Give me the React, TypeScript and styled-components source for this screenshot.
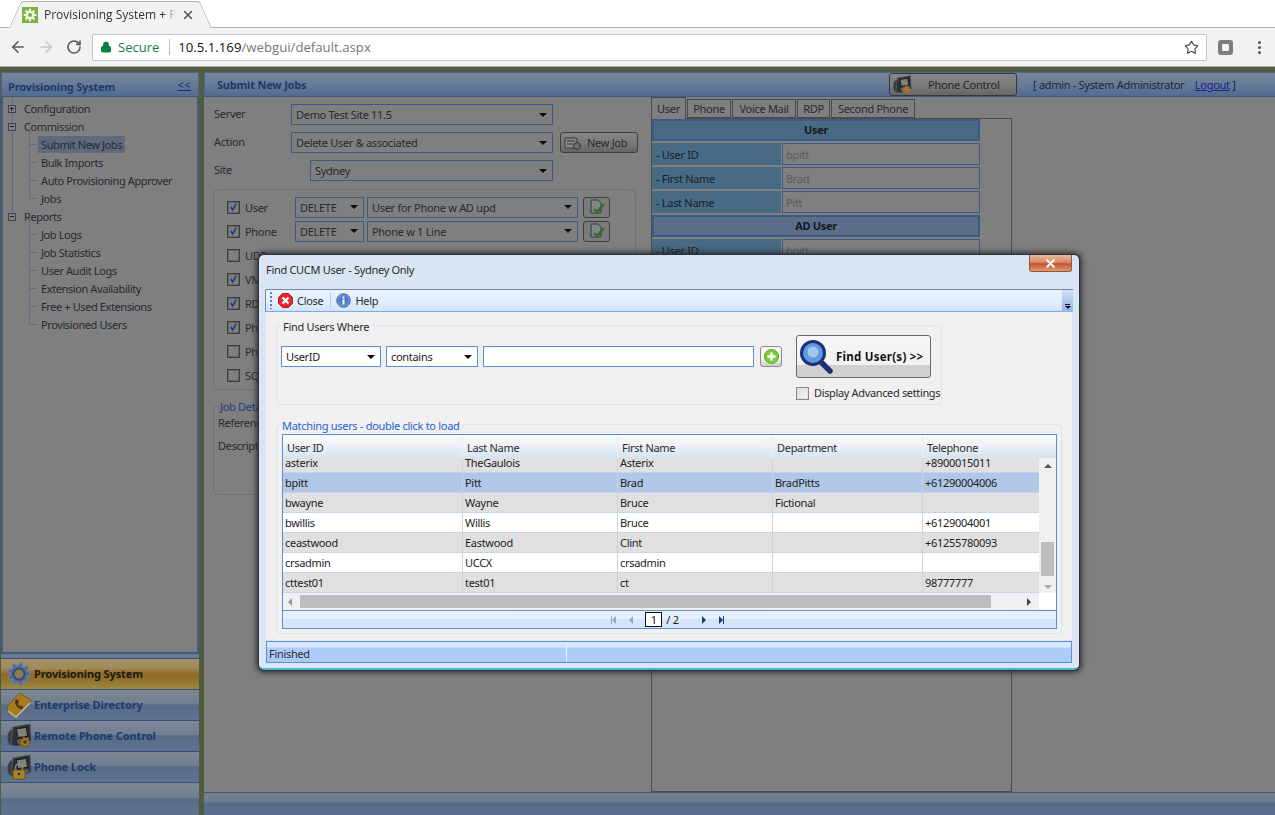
import React from "react";
import styled, { createGlobalStyle } from "styled-components";
import { ArrowLeft, ArrowRight, RotateCw, Lock, Star, X } from "lucide-react";

const UI = `"Noto Sans", "DejaVu Sans", sans-serif`;

const Global = createGlobalStyle`
  html, body { margin: 0; padding: 0; width: 1275px; height: 815px; overflow: hidden; }
  body { font-family: ${UI}; font-size: 11px; letter-spacing: -0.3px; }
  * { box-sizing: border-box; }
`;

const Page = styled.div`
  width: 1275px;
  height: 815px;
  display: flex;
  flex-direction: column;
`;

/* ---------- browser chrome ---------- */
const TabStrip = styled.div`
  height: 28px;
  flex: none;
  background: #fff;
  display: flex;
  align-items: flex-end;
  padding-left: 15px;
  box-shadow: inset 0 -1px 0 #b4b4b4;
`;
const BrowserTab = styled.div`
  position: relative;
  width: 190px;
  height: 27px;
  display: flex;
  align-items: center;
  padding-left: 7px;
  font-family: "Open Sans", sans-serif;
  font-size: 12px;
  letter-spacing: 0;
  color: #333;
  &::before, &::after {
    content: "";
    position: absolute;
    top: 0;
    bottom: 0;
    width: 55%;
    background: #f2f2f2;
    border: 1px solid #b4b4b4;
    border-bottom: none;
    z-index: 0;
  }
  &::before { left: 0; border-right: none; border-radius: 3px 0 0 0; transform: skewX(-24deg); }
  &::after { right: 0; border-left: none; border-radius: 0 3px 0 0; transform: skewX(24deg); }
  & > * { position: relative; z-index: 1; }
`;
const TabTitle = styled.span`
  width: 132px;
  margin-left: 6px;
  white-space: nowrap;
  overflow: hidden;
  -webkit-mask-image: linear-gradient(90deg, #000 90%, transparent 100%);
  mask-image: linear-gradient(90deg, #000 90%, transparent 100%);
`;
const TabClose = styled.span`
  display: flex;
  margin-left: 5px;
  color: #555;
`;
const BrowserBar = styled.div`
  height: 39px;
  flex: none;
  background: #f2f2f2;
  border-bottom: 1px solid #a9a9a9;
  display: flex;
  align-items: center;
  padding-left: 4px;
`;
const NavBtn = styled.span<{ $c: string }>`
  width: 28px;
  display: flex;
  justify-content: center;
  color: ${(p) => p.$c};
`;
const AddressBar = styled.div`
  width: 1115px;
  height: 27px;
  margin-left: 4px;
  background: #fff;
  border: 1px solid #c4c4c4;
  border-radius: 2px;
  display: flex;
  align-items: center;
  padding-left: 7px;
  font-family: "Open Sans", sans-serif;
  font-size: 13.2px;
  letter-spacing: 0;
  position: relative;
`;
const Secure = styled.span`
  color: #0b8043;
  margin-left: 6px;
  font-size: 13px;
`;
const AddrSep = styled.span`
  width: 1px;
  height: 16px;
  background: #bdbdbd;
  margin: 0 8px 0 10px;
`;
const Host = styled.span`
  color: #111;
`;
const Path = styled.span`
  color: #777;
  flex: 1;
`;
const StarSlot = styled.span`
  display: flex;
  color: #444;
  margin-right: 7px;
`;
const ExtIcon = styled.span`
  width: 15px;
  height: 15px;
  margin-left: 11px;
  border-radius: 3px;
  background: #7d7d7d;
  display: flex;
  align-items: center;
  justify-content: center;
  &::after {
    content: "";
    width: 7px;
    height: 7px;
    background: #f2f2f2;
    border-radius: 1px;
  }
`;
const Kebab = styled.span`
  margin-left: 25px;
  display: flex;
  flex-direction: column;
  gap: 2px;
  & > i { width: 3px; height: 3px; border-radius: 50%; background: #555; display: block; }
`;

/* ---------- application (dimmed behind the dialog) ---------- */
const AppArea = styled.div`
  position: relative;
  flex: 1;
  min-height: 0;
  background: #515c3f;
  display: flex;
  padding: 5px 0 0 1px;
  color: #262a30;
`;
const LeftColumn = styled.div`
  width: 198px;
  display: flex;
  flex-direction: column;
`;
const PanelHeader = styled.div`
  height: 25px;
  flex: none;
  background: linear-gradient(180deg, #78849a 0%, #6a7c98 45%, #516b91 100%);
  border: 1px solid #4a6690;
  border-bottom: 1px solid #3f5b85;
  display: flex;
  align-items: center;
  font-weight: bold;
  letter-spacing: -0.2px;
  color: #1c3a6c;
`;
const LeftHeader = styled(PanelHeader)`
  justify-content: space-between;
  padding: 4px 7px 0 6px;
`;
const Collapse = styled.a`
  color: #11268a;
  text-decoration: underline;
  font-weight: normal;
  font-size: 11px;
  letter-spacing: 0.4px;
  margin-top: -5px;
`;
const TreeBox = styled.div`
  flex: 1;
  min-height: 0;
  background: #7f7f7f;
  border: 2px solid #3f5b85;
  border-top: none;
  padding: 3px 0 0 4px;
  letter-spacing: -0.4px;
`;
const TreeRow = styled.div`
  position: relative;
  height: 18px;
  line-height: 18px;
  padding-left: 17px;
  white-space: nowrap;
`;
const Expander = styled.span`
  position: absolute;
  left: 1px;
  top: 5px;
  width: 8px;
  height: 8px;
  border: 1px solid #3c4450;
  background: #7f7f7f;
  z-index: 1;
  &::before {
    content: "";
    position: absolute;
    left: 1px;
    right: 1px;
    top: 2px;
    height: 1px;
    background: #222;
  }
  &::after {
    content: "";
    display: ${(p: { $plus?: boolean }) => (p.$plus ? "block" : "none")};
    position: absolute;
    top: 1px;
    bottom: 1px;
    left: 2px;
    width: 1px;
    background: #222;
  }
`;
const TreeTrunk = styled.div`
  position: relative;
  &::before {
    content: "";
    position: absolute;
    left: 5px;
    top: -3px;
    height: 120px;
    width: 1px;
    background: #5b6c85;
  }
`;
const TreeChildren = styled.div`
  position: relative;
  margin-left: 22px;
  &::before {
    content: "";
    position: absolute;
    left: 0;
    top: -9px;
    bottom: 9px;
    width: 1px;
    background: #5b6c85;
  }
`;
const TreeChild = styled.div`
  position: relative;
  height: 18px;
  line-height: 18px;
  padding-left: 12px;
  white-space: nowrap;
  &::before {
    content: "";
    position: absolute;
    left: 0;
    top: 8px;
    width: 8px;
    height: 1px;
    background: #5b6c85;
  }
`;
const TreeSelected = styled.span`
  background: #5f6a7c;
  padding: 1px 3px;
  margin-left: -3px;
`;
const NavGap = styled.div`
  height: 5px;
  flex: none;
  background: #6c7a8e;
  border-bottom: 1px solid #34507c;
`;
const NavItem = styled.div<{ $active?: boolean }>`
  height: 31px;
  flex: none;
  display: flex;
  align-items: center;
  gap: 2px;
  padding: 0 0 1px 5px;
  font-weight: bold;
  letter-spacing: -0.1px;
  border-bottom: 1px solid #34507c;
  color: ${(p) => (p.$active ? "#1b1a14" : "#1d3a68")};
  background: ${(p) =>
    p.$active
      ? "linear-gradient(180deg,#a3916e 0%,#a38a58 30%,#8e6a25 50%,#93722b 70%,#9b8a44 100%)"
      : "linear-gradient(180deg,#7d8795 0%,#727f92 45%,#586c88 50%,#5f7290 100%)"};
`;
const NavFooter = styled.div`
  height: 32px;
  flex: none;
  background: linear-gradient(180deg, #7d8795 0%, #727f92 45%, #586c88 50%, #5f7290 100%);
`;

const RightColumn = styled.div`
  flex: 1;
  margin-left: 5px;
  display: flex;
  flex-direction: column;
  min-width: 0;
`;
const RightHeader = styled(PanelHeader)`
  padding-left: 12px;
  border-right: none;
`;
const HeaderTitle = styled.span`
  width: 672px;
`;
const PhoneControl = styled.div`
  width: 128px;
  height: 23px;
  border: 1px solid #33383f;
  border-radius: 3px;
  background: linear-gradient(180deg, #878787 0%, #7b7b7b 55%, #666 100%);
  display: flex;
  align-items: center;
  padding-left: 2px;
  font-weight: normal;
  color: #22262c;
  letter-spacing: -0.2px;
  & > span { margin-left: 16px; }
`;
const UserBadge = styled.div`
  margin-left: 16px;
  font-weight: normal;
  color: #22262c;
  white-space: nowrap;
  letter-spacing: -0.3px;
`;
const LogoutLink = styled.a`
  color: #11268a;
  text-decoration: underline;
  margin-left: 8px;
`;
const RightBody = styled.div`
  flex: 1;
  min-height: 0;
  background: #7f7f7f;
  display: flex;
`;
const FormCol = styled.div`
  width: 447px;
  padding: 7px 0 0 9px;
  display: flex;
  flex-direction: column;
`;
const FormRow = styled.div`
  display: flex;
  align-items: center;
  height: 21px;
  margin-bottom: 7px;
`;
const FormLabel = styled.span<{ $w: number }>`
  width: ${(p) => p.$w}px;
  margin-left: 1px;
  margin-top: -2px;
`;
const DimSelect = styled.div<{ $w: number }>`
  width: ${(p) => p.$w}px;
  height: 21px;
  flex: none;
  border: 1px solid #3f5b85;
  display: flex;
  align-items: center;
  justify-content: space-between;
  padding: 0 5px 0 4px;
  white-space: nowrap;
  overflow: hidden;
`;
const Caret = styled.i`
  width: 0;
  height: 0;
  flex: none;
  border-left: 4px solid transparent;
  border-right: 4px solid transparent;
  border-top: 4px solid #0c0c0c;
`;
const NewJob = styled.div`
  width: 78px;
  height: 21px;
  margin-left: 7px;
  border: 1px solid #3a3f46;
  border-radius: 3px;
  background: linear-gradient(180deg, #868686, #777 60%, #656565);
  display: flex;
  align-items: center;
  gap: 5px;
  padding-left: 3px;
`;
const GroupBox = styled.div`
  width: 423px;
  height: 201px;
  margin: 1px 0 0 0;
  border: 1px solid #707070;
  border-radius: 5px;
  padding: 5px 0 0 13px;
`;
const GroupRow = styled.div`
  height: 24px;
  display: flex;
  align-items: center;
`;
const DimCheckLabel = styled.span`
  width: 50px;
  margin-left: 5px;
  white-space: nowrap;
`;
const RowButton = styled.div`
  width: 27px;
  height: 21px;
  margin-left: 5px;
  border: 1px solid #3a3f46;
  border-radius: 3px;
  background: #7b7b7b;
  display: flex;
  align-items: center;
  justify-content: center;
`;
const Gap3 = styled.span`
  width: 3px;
  flex: none;
`;
const CheckBox = styled.span<{ $dim?: boolean }>`
  width: 13px;
  height: 13px;
  flex: none;
  display: flex;
  align-items: center;
  justify-content: center;
  border: 1px solid ${(p) => (p.$dim ? "#3c3c3c" : "#8a8a8a")};
  box-shadow: inset 0 0 0 1px ${(p) => (p.$dim ? "#676767" : "#e0e0e0")};
  background: ${(p) => (p.$dim ? "#7f7f7f" : "linear-gradient(135deg,#dcdcdc,#f8f8f8)")};
`;
const JobDetails = styled.div`
  position: relative;
  width: 423px;
  height: 90px;
  margin-top: 15px;
  border: 1px solid #707070;
  border-radius: 5px;
`;
const JobLegend = styled.span`
  position: absolute;
  left: 4px;
  top: -7px;
  background: #7f7f7f;
  padding: 0 2px;
  color: #1c3a80;
`;
const JobLine = styled.div<{ $top: number }>`
  margin: ${(p) => p.$top}px 0 0 4px;
  height: 14px;
  line-height: 14px;
`;
const TabsCol = styled.div`
  width: 361px;
  display: flex;
  flex-direction: column;
`;
const TabRow = styled.div`
  height: 21px;
  flex: none;
  display: flex;
  align-items: flex-end;
  gap: 1px;
`;
const DimTab = styled.div<{ $w: number; $active?: boolean }>`
  width: ${(p) => p.$w}px;
  height: ${(p) => (p.$active ? 22 : 19)}px;
  margin-bottom: ${(p) => (p.$active ? -1 : 0)}px;
  position: relative;
  border: 1px solid #4a4a4a;
  border-bottom: ${(p) => (p.$active ? "none" : "1px solid #4a4a4a")};
  background: #7f7f7f;
  text-align: center;
  line-height: 17px;
  padding-top: ${(p) => (p.$active ? 2 : 0)}px;
`;
const TabBody = styled.div`
  flex: 1;
  border: 1px solid #4a4a4a;
  overflow: hidden;
`;
const SectionBar = styled.div<{ $blue?: boolean }>`
  width: 328px;
  height: 22px;
  margin-top: ${(p) => (p.$blue ? 0 : 2)}px;
  border: 2px solid #3c5a88;
  background: ${(p) => (p.$blue ? "#476a85" : "#5b6d88")};
  color: #141a22;
  font-weight: bold;
  text-align: center;
  line-height: 18px;
`;
const DetailRow = styled.div`
  width: 328px;
  height: 22px;
  margin: 2px 0 0;
  display: flex;
`;
const DetailLabel = styled.div`
  width: 129px;
  background: #476a85;
  padding-left: 4px;
  line-height: 24px;
  color: #1a2026;
`;
const DetailValue = styled.div`
  flex: 1;
  margin-left: 1px;
  border: 1px solid #3f5b85;
  padding-left: 3px;
  line-height: 22px;
  color: #5b5b5b;
`;
const RightFooter = styled.div`
  height: 23px;
  flex: none;
  border-top: 1px solid #3f5b85;
  background: linear-gradient(180deg, #75808f 0%, #6f7c90 40%, #566b8b 45%, #5d7090 100%);
`;

/* ---------- dialog ---------- */
const Modal = styled.div`
  position: absolute;
  left: 259px;
  top: 188px;
  width: 820px;
  height: 415px;
  background: #d9e5f2;
  border-radius: 5px;
  border-bottom: 2px solid #4cb6d6;
  box-shadow: 0 0 0 1px #2e3236, 0 0 6px 2px #1f2124;
  display: flex;
  flex-direction: column;
  color: #2b2b2b;
`;
const TitleBar = styled.div`
  height: 34px;
  flex: none;
  display: flex;
  justify-content: space-between;
  align-items: flex-start;
  padding: 0 7px 0 7px;
`;
const TitleText = styled.span`
  margin-top: 7px;
  line-height: 15px;
`;
const CloseX = styled.div`
  width: 43px;
  height: 17px;
  border: 1px solid #8a5a3a;
  border-top: none;
  border-radius: 0 0 3px 3px;
  background: linear-gradient(180deg, #e9b9a0 0%, #d98a66 45%, #c0562f 55%, #e39a74 100%);
  display: flex;
  align-items: center;
  justify-content: center;
  color: #fff;
`;
const ToolBar = styled.div`
  height: 23px;
  flex: none;
  margin: 0 6px;
  border: 1px solid #7a8794;
  border-bottom: 1px solid #7dabe8;
  border-right: none;
  border-radius: 2px 0 0 0;
  background: linear-gradient(180deg, #e9f2fe 0%, #e1edfd 60%, #d2e3fa 100%);
  display: flex;
  align-items: center;
  padding-left: 4px;
`;
const Grip = styled.span`
  width: 2px;
  height: 17px;
  background: repeating-linear-gradient(180deg, #4f82cc 0 2px, transparent 2px 4px);
  margin-right: 6px;
`;
const ToolItem = styled.span`
  display: flex;
  align-items: center;
  gap: 4px;
`;
const ToolSep = styled.span`
  width: 1px;
  height: 16px;
  background: #b7cbe4;
  margin: 0 5px 0 7px;
`;
const Overflow = styled.span`
  margin-left: auto;
  width: 11px;
  height: 22px;
  background: linear-gradient(180deg, #cfe0f7 0%, #8fb4e8 100%);
  display: flex;
  flex-direction: column;
  align-items: center;
  justify-content: flex-end;
  padding-bottom: 3px;
  gap: 1px;
  &::before { content: ""; width: 5px; height: 1px; background: #111; }
  &::after { content: ""; border-left: 3px solid transparent; border-right: 3px solid transparent; border-top: 3px solid #111; }
`;
const ModalBody = styled.div`
  flex: 1;
  min-height: 0;
  margin: 0 7px;
  background-color: #f0f0f0;
  background-image: radial-gradient(#e8e8e8 0.6px, transparent 0.7px);
  background-size: 4px 4px;
  padding: 13px 0 0 10px;
`;
const Field = styled.div<{ $w: number; $h: number }>`
  position: relative;
  width: ${(p) => p.$w}px;
  height: ${(p) => p.$h}px;
  border: 1px solid #dfe4ea;
  border-radius: 4px;
`;
const FieldLegend = styled.span<{ $blue?: boolean }>`
  position: absolute;
  left: ${(p) => (p.$blue ? 3 : 4)}px;
  top: -6px;
  line-height: 14px;
  padding: 0 3px 0 2px;
  background: #f0f0f0;
  white-space: nowrap;
  color: ${(p) => (p.$blue ? "#1f5fd0" : "#2b2b2b")};
`;
const FindRow = styled.div`
  display: flex;
  align-items: flex-start;
  padding: 9px 0 0 4px;
`;
const FindInputs = styled.div`
  display: flex;
  align-items: center;
  margin-top: 11px;
  gap: 5px;
`;
const LightSelect = styled.div<{ $w: number }>`
  width: ${(p) => p.$w}px;
  height: 21px;
  background: #fff;
  border: 1px solid #5b8fd6;
  display: flex;
  align-items: center;
  justify-content: space-between;
  padding: 0 5px 0 4px;
  color: #222;
`;
const TextInput = styled.div`
  width: 271px;
  height: 21px;
  background: #fff;
  border: 1px solid #5b8fd6;
`;
const AddBtn = styled.div`
  width: 22px;
  height: 21px;
  margin-left: 1px;
  border: 1px solid #8c8c8c;
  border-radius: 3px;
  background: linear-gradient(180deg, #f6f6f6 60%, #cfcfcf 100%);
  display: flex;
  align-items: center;
  justify-content: center;
`;
const FindSide = styled.div`
  margin-left: 14px;
  display: flex;
  flex-direction: column;
`;
const FindButton = styled.div`
  position: relative;
  width: 135px;
  height: 43px;
  border: 1px solid #6a6a6a;
  border-radius: 3px;
  background: linear-gradient(180deg, #f7f7f7 0%, #f1f1f1 70%, #cfcfcf 72%, #d2d2d2 100%);
  display: flex;
  align-items: center;
  padding-left: 2px;
  font-weight: bold;
  color: #111;
  font-size: 11.5px;
  & > span { margin-left: 1px; margin-top: -1px; white-space: nowrap; letter-spacing: 0.25px; }
`;
const AdvRow = styled.div`
  display: flex;
  align-items: center;
  gap: 5px;
  margin-top: 8px;
  white-space: nowrap;
  line-height: 14px;
  letter-spacing: -0.35px;
`;
const MatchField = styled(Field)`
  margin-top: 19px;
  padding: 9px 4px 0 5px;
`;
const GridBox = styled.div`
  border: 1px solid #5b8fd6;
  height: 195px;
  background: #fff;
  display: flex;
  flex-direction: column;
`;
const COLS = "180px 155px 155px 150px 1fr";
const GridHead = styled.div`
  height: 23px;
  flex: none;
  display: grid;
  grid-template-columns: ${COLS};
  background: linear-gradient(180deg, #fbfcfe 0%, #eef3f8 40%, #d7e3ef 100%);
`;
const HeadCell = styled.div`
  padding: 6px 0 0 4px;
  line-height: 14px;
  border-right: 1px solid #eaf0f7;
  &:last-child { border-right: none; }
`;
const GridMiddle = styled.div`
  height: 135px;
  flex: none;
  display: flex;
`;
const RowsClip = styled.div`
  width: 756px;
  overflow: hidden;
`;
const Rows = styled.div`
  margin-top: -5px;
`;
const DataRow = styled.div<{ $tone: "grey" | "white" | "sel" }>`
  height: 20px;
  display: grid;
  grid-template-columns: ${COLS};
  border-bottom: 1px solid #c6d4ea;
  color: #222;
  background: ${(p) => (p.$tone === "sel" ? "#b0c7e7" : p.$tone === "grey" ? "#e0e0e0" : "#fff")};
`;
const DataCell = styled.div`
  padding-left: 2px;
  line-height: 19px;
  border-right: 1px solid #c6d4ea;
  white-space: nowrap;
  &:last-child { border-right: none; }
`;
const VBar = styled.div`
  flex: 1;
  background: #f0f0f0;
  position: relative;
  display: flex;
  flex-direction: column;
  align-items: center;
  justify-content: space-between;
  padding: 6px 0 4px;
`;
const VThumb = styled.div`
  position: absolute;
  left: 2px;
  top: 84px;
  width: 13px;
  height: 34px;
  background: #bdbdbd;
`;
const Tri = styled.i<{ $dir: "up" | "down" | "left" | "right"; $c: string }>`
  width: 0;
  height: 0;
  display: block;
  flex: none;
  ${(p) =>
    p.$dir === "up"
      ? `border-left:4px solid transparent;border-right:4px solid transparent;border-bottom:4px solid ${p.$c};`
      : p.$dir === "down"
      ? `border-left:4px solid transparent;border-right:4px solid transparent;border-top:4px solid ${p.$c};`
      : p.$dir === "left"
      ? `border-top:4px solid transparent;border-bottom:4px solid transparent;border-right:4px solid ${p.$c};`
      : `border-top:4px solid transparent;border-bottom:4px solid transparent;border-left:4px solid ${p.$c};`}
`;
const HBarRow = styled.div`
  height: 17px;
  flex: none;
  display: flex;
`;
const HBar = styled.div`
  width: 756px;
  background: #f0f0f0;
  display: flex;
  align-items: center;
  padding-left: 5px;
`;
const HThumb = styled.div`
  width: 691px;
  height: 13px;
  background: #bdbdbd;
  margin: 0 36px 0 8px;
`;
const Pager = styled.div`
  flex: 1;
  border-top: 1px solid #5b8fd6;
  background: linear-gradient(180deg, #e8f1fe 0%, #e5effd 45%, #d3e4fb 50%, #d6e6fc 100%);
  display: flex;
  align-items: center;
  justify-content: center;
  padding-right: 4px;
`;
const PageEnd = styled.span<{ $c: string; $right?: boolean }>`
  display: flex;
  align-items: center;
  flex-direction: ${(p) => (p.$right ? "row" : "row-reverse")};
  &::after { content: ""; width: 1px; height: 8px; background: ${(p) => p.$c}; }
`;
const PageBox = styled.span`
  width: 17px;
  height: 15px;
  border: 1px solid #111;
  background: #fff;
  text-align: center;
  line-height: 13px;
  margin: 0 4px 0 12px;
  color: #111;
`;
const PageOf = styled.span`
  color: #222;
  margin-right: 23px;
`;
const PagerGap = styled.span<{ $w: number }>`
  width: ${(p) => p.$w}px;
`;
const StatusBar = styled.div`
  height: 22px;
  flex: none;
  margin: 1px 7px 5px 7px;
  border: 1px solid #5b8fd6;
  background: linear-gradient(180deg, #d6e6fc 0%, #d6e6fc 25%, #aecdf8 30%, #abcbf7 100%);
  display: flex;
  align-items: center;
  line-height: 14px;
`;
const StatusCell = styled.span`
  width: 300px;
  height: 100%;
  padding: 5px 0 0 2px;
  border-right: 1px solid #eef4fd;
`;

/* ---------- drawings ---------- */
function gearPath(cx: number, cy: number, r: number, teeth: number, depth: number) {
  const pts: string[] = [];
  const step = (Math.PI * 2) / teeth;
  for (let i = 0; i < teeth; i++) {
    const a = i * step;
    const add = (ang: number, rad: number) =>
      pts.push(`${(cx + Math.cos(ang) * rad).toFixed(2)} ${(cy + Math.sin(ang) * rad).toFixed(2)}`);
    add(a - step * 0.32, r);
    add(a - step * 0.2, r + depth);
    add(a + step * 0.2, r + depth);
    add(a + step * 0.32, r);
  }
  return "M" + pts.join("L") + "Z";
}

const Favicon = () => (
  <svg width="16" height="16" viewBox="0 0 20 20">
    <rect width="20" height="20" fill="#7cb342" />
    <path d={gearPath(10, 10, 5.6, 8, 2.4)} fill="#f3f7ee" />
    <circle cx="10" cy="10" r="2.6" fill="#7cb342" />
  </svg>
);
const GearNav = () => (
  <svg width="26" height="26" viewBox="0 0 26 26">
    <path d={gearPath(13, 13, 8.5, 9, 3)} fill="#4f6b94" stroke="#6f86a8" strokeWidth="1" />
    <circle cx="13" cy="13" r="5.5" fill="#8d7a55" stroke="#34496c" strokeWidth="2" />
  </svg>
);
const BookNav = () => (
  <svg width="26" height="26" viewBox="0 0 26 26">
    <path d="M1 14 L14 1 L25 8 L24 11 L10 25 L2 19 Z" fill="#a37a22" stroke="#7d5c16" />
    <path d="M2 19 L10 25 L24 11" fill="none" stroke="#c7b98a" strokeWidth="1.5" />
    <path d="M9.5 8 C8 11 11 16 15.5 17.5 L17.5 15.5 L15 13.5 L13.8 14.5 C12.5 13.5 12 12.5 11.8 11.5 L13 10 L11.5 7 Z" fill="#4a3312" />
  </svg>
);
const PhoneBase = () => (
  <>
    <path d="M2 11 C3 7 6 6 9 6 L10 17 L4 22 C2 20 1 15 2 11Z" fill="#3a3d42" />
    <path d="M7 4 L24 1 L25 18 L11 23 L5 22 Z" fill="#2c2e33" stroke="#54585f" />
    <rect x="11" y="5" width="10" height="9" fill="#7b8478" stroke="#1c1c1c" transform="rotate(-8 16 9)" />
    <path d="M11 17 L22 15 L23 18 L12 21 Z" fill="#5d6066" />
  </>
);
const RemoteNav = () => (
  <svg width="26" height="26" viewBox="0 0 26 26">
    <PhoneBase />
    <path d={gearPath(19, 19, 4, 7, 1.6)} fill="#a3752a" stroke="#5c3f12" strokeWidth=".5" />
    <circle cx="19" cy="19" r="1.8" fill="#4a3a1e" />
  </svg>
);
const LockNav = () => (
  <svg width="26" height="26" viewBox="0 0 26 26">
    <PhoneBase />
    <path d="M9.5 16 V13.5 a3.5 3.5 0 0 1 7 0 V16" fill="none" stroke="#8c8c84" strokeWidth="1.6" />
    <rect x="7" y="16" width="12" height="9" rx="1" fill="#a8842c" stroke="#6d5518" />
    <circle cx="13" cy="20" r="1.3" fill="#3a2c0a" />
  </svg>
);
const MiniPhone = () => (
  <svg width="20" height="20" viewBox="0 0 26 26">
    <PhoneBase />
    <path d={gearPath(19, 19, 4, 7, 1.6)} fill="#a3752a" />
  </svg>
);
const PageCheck = () => (
  <svg width="17" height="16" viewBox="0 0 17 16">
    <path d="M3 1 H10 L13 4 V14 H3 Z" fill="#808585" stroke="#2f3a3a" />
    <path d="M6 10 L9 13 L16 5" fill="none" stroke="#2f6a2a" strokeWidth="2.4" />
  </svg>
);
const CheckMark = ({ c }: { c: string }) => (
  <svg width="9" height="10" viewBox="0 0 12 12">
    <path d="M2.5 6 L5 10 L9.5 1.5" fill="none" stroke={c} strokeWidth="2" />
  </svg>
);
const CloseIcon = () => (
  <svg width="15" height="15" viewBox="0 0 15 15">
    <path d="M4.5 .5 H10.5 L14.5 4.5 V10.5 L10.5 14.5 H4.5 L.5 10.5 V4.5 Z" fill="#e8262a" stroke="#b51c1f" />
    <path d="M4.5 4.5 L10.5 10.5 M10.5 4.5 L4.5 10.5" stroke="#fff" strokeWidth="2.4" />
  </svg>
);
const HelpIcon = () => (
  <svg width="15" height="15" viewBox="0 0 15 15">
    <circle cx="7.5" cy="7.5" r="6.8" fill="#6f97d6" stroke="#3e67a8" />
    <circle cx="7.5" cy="7.5" r="5" fill="#4f7cc4" />
    <rect x="6.5" y="6.5" width="2" height="5" fill="#fff" />
    <rect x="6.5" y="3.5" width="2" height="2" fill="#fff" />
  </svg>
);
const PlusIcon = () => (
  <svg width="15" height="15" viewBox="0 0 15 15">
    <circle cx="7.5" cy="7.5" r="7" fill="#7ccc3e" stroke="#5aa528" />
    <path d="M7.5 3.5 V11.5 M3.5 7.5 H11.5" stroke="#fff" strokeWidth="2.4" />
  </svg>
);
const Magnifier = () => (
  <svg width="36" height="36" viewBox="0 0 36 36">
    <path d="M20 21 L31 32" stroke="#1f2f7a" strokeWidth="5.5" strokeLinecap="round" />
    <circle cx="14" cy="14" r="11.5" fill="#5f9ae0" stroke="#1f2f7a" strokeWidth="3" />
    <circle cx="14" cy="13" r="5.5" fill="#a3c6ef" />
  </svg>
);
const NewJobIcon = () => (
  <svg width="18" height="16" viewBox="0 0 18 16">
    <rect x="1" y="3" width="12" height="10" rx="1" fill="#8a8a8a" stroke="#2f3338" />
    <path d="M3 6 H11 M3 9 H9" stroke="#33373c" />
    <circle cx="13" cy="11" r="3.5" fill="#6e6e6e" stroke="#2f3338" />
  </svg>
);

/* ---------- data ---------- */
const rows: { tone: "grey" | "white" | "sel"; c: string[] }[] = [
  { tone: "grey", c: ["asterix", "TheGaulois", "Asterix", "", "+8900015011"] },
  { tone: "sel", c: ["bpitt", "Pitt", "Brad", "BradPitts", "+61290004006"] },
  { tone: "grey", c: ["bwayne", "Wayne", "Bruce", "Fictional", ""] },
  { tone: "white", c: ["bwillis", "Willis", "Bruce", "", "+6129004001"] },
  { tone: "grey", c: ["ceastwood", "Eastwood", "Clint", "", "+61255780093"] },
  { tone: "white", c: ["crsadmin", "UCCX", "crsadmin", "", ""] },
  { tone: "grey", c: ["cttest01", "test01", "ct", "", "98777777"] },
];
const groupRows = [
  { l: "User", on: true, a: "User for Phone w AD upd" },
  { l: "Phone", on: true, a: "Phone w 1 Line" },
  { l: "UDP", on: false },
  { l: "VM", on: true },
  { l: "RDP", on: true },
  { l: "Phone", on: true },
  { l: "Phone", on: false },
  { l: "SQL", on: false },
];

export default function App() {
  return (
    <Page>
      <Global />
      <TabStrip>
        <BrowserTab>
          <Favicon />
          <TabTitle>Provisioning System + Phone</TabTitle>
          <TabClose><X size={14} strokeWidth={2.6} /></TabClose>
        </BrowserTab>
      </TabStrip>
      <BrowserBar>
        <NavBtn $c="#5a5a5a"><ArrowLeft size={18} strokeWidth={2.2} /></NavBtn>
        <NavBtn $c="#c9c9c9"><ArrowRight size={18} strokeWidth={2.2} /></NavBtn>
        <NavBtn $c="#5a5a5a"><RotateCw size={16} strokeWidth={2.4} /></NavBtn>
        <AddressBar>
          <Lock size={12} color="#0b8043" fill="#0b8043" />
          <Secure>Secure</Secure>
          <AddrSep />
          <Host>10.5.1.169</Host>
          <Path>/webgui/default.aspx</Path>
          <StarSlot><Star size={15} strokeWidth={1.8} /></StarSlot>
        </AddressBar>
        <ExtIcon />
        <Kebab><i /><i /><i /></Kebab>
      </BrowserBar>

      <AppArea>
        <LeftColumn>
          <LeftHeader>
            <span>Provisioning System</span>
            <Collapse>&lt;&lt;</Collapse>
          </LeftHeader>
          <TreeBox>
            <TreeTrunk>
              <TreeRow><Expander $plus />Configuration</TreeRow>
              <TreeRow><Expander />Commission</TreeRow>
              <TreeChildren>
                <TreeChild><TreeSelected>Submit New Jobs</TreeSelected></TreeChild>
                <TreeChild>Bulk Imports</TreeChild>
                <TreeChild>Auto Provisioning Approver</TreeChild>
                <TreeChild>Jobs</TreeChild>
              </TreeChildren>
              <TreeRow><Expander />Reports</TreeRow>
              <TreeChildren>
                <TreeChild>Job Logs</TreeChild>
                <TreeChild>Job Statistics</TreeChild>
                <TreeChild>User Audit Logs</TreeChild>
                <TreeChild>Extension Availability</TreeChild>
                <TreeChild>Free + Used Extensions</TreeChild>
                <TreeChild>Provisioned Users</TreeChild>
              </TreeChildren>
            </TreeTrunk>
          </TreeBox>
          <NavGap />
          <NavItem $active><GearNav />Provisioning System</NavItem>
          <NavItem><BookNav />Enterprise Directory</NavItem>
          <NavItem><RemoteNav />Remote Phone Control</NavItem>
          <NavItem><LockNav />Phone Lock</NavItem>
          <NavFooter />
        </LeftColumn>

        <RightColumn>
          <RightHeader>
            <HeaderTitle>Submit New Jobs</HeaderTitle>
            <PhoneControl><MiniPhone /><span>Phone Control</span></PhoneControl>
            <UserBadge>[ admin - System Administrator <LogoutLink>Logout</LogoutLink> ]</UserBadge>
          </RightHeader>
          <RightBody>
            <FormCol>
              <FormRow>
                <FormLabel $w={77}>Server</FormLabel>
                <DimSelect $w={262}>Demo Test Site 11.5<Caret /></DimSelect>
              </FormRow>
              <FormRow>
                <FormLabel $w={77}>Action</FormLabel>
                <DimSelect $w={262}>Delete User &amp; associated<Caret /></DimSelect>
                <NewJob><NewJobIcon />New Job</NewJob>
              </FormRow>
              <FormRow>
                <FormLabel $w={96}>Site</FormLabel>
                <DimSelect $w={243}>Sydney<Caret /></DimSelect>
              </FormRow>
              <GroupBox>
                {groupRows.map((r, i) => (
                  <GroupRow key={i}>
                    <CheckBox $dim>{r.on && <CheckMark c="#1d3a80" />}</CheckBox>
                    <DimCheckLabel>{r.l}</DimCheckLabel>
                    {r.a && (
                      <>
                        <DimSelect $w={69}>DELETE<Caret /></DimSelect>
                        <Gap3 />
                        <DimSelect $w={211}>{r.a}<Caret /></DimSelect>
                        <RowButton><PageCheck /></RowButton>
                      </>
                    )}
                  </GroupRow>
                ))}
              </GroupBox>
              <JobDetails>
                <JobLegend>Job Details</JobLegend>
                <JobLine $top={10}>Reference</JobLine>
                <JobLine $top={9}>Description</JobLine>
              </JobDetails>
            </FormCol>
            <TabsCol>
              <TabRow>
                <DimTab $w={35} $active>User</DimTab>
                <DimTab $w={44}>Phone</DimTab>
                <DimTab $w={64}>Voice Mail</DimTab>
                <DimTab $w={33}>RDP</DimTab>
                <DimTab $w={84}>Second Phone</DimTab>
              </TabRow>
              <TabBody>
                <SectionBar $blue>User</SectionBar>
                <DetailRow><DetailLabel>- User ID</DetailLabel><DetailValue>bpitt</DetailValue></DetailRow>
                <DetailRow><DetailLabel>- First Name</DetailLabel><DetailValue>Brad</DetailValue></DetailRow>
                <DetailRow><DetailLabel>- Last Name</DetailLabel><DetailValue>Pitt</DetailValue></DetailRow>
                <SectionBar>AD User</SectionBar>
                <DetailRow><DetailLabel>- User ID</DetailLabel><DetailValue>bpitt</DetailValue></DetailRow>
              </TabBody>
            </TabsCol>
          </RightBody>
          <RightFooter />
        </RightColumn>

        <Modal>
          <TitleBar>
            <TitleText>Find CUCM User - Sydney Only</TitleText>
            <CloseX><X size={13} strokeWidth={3.4} /></CloseX>
          </TitleBar>
          <ToolBar>
            <Grip />
            <ToolItem><CloseIcon />Close</ToolItem>
            <ToolSep />
            <ToolItem><HelpIcon />Help</ToolItem>
            <Overflow />
          </ToolBar>
          <ModalBody>
            <Field $w={666} $h={80}>
              <FieldLegend>Find Users Where</FieldLegend>
              <FindRow>
                <FindInputs>
                  <LightSelect $w={100}>UserID<Caret /></LightSelect>
                  <LightSelect $w={92}>contains<Caret /></LightSelect>
                  <TextInput />
                  <AddBtn><PlusIcon /></AddBtn>
                </FindInputs>
                <FindSide>
                  <FindButton><Magnifier /><span>Find User(s) &gt;&gt;</span></FindButton>
                  <AdvRow><CheckBox />Display Advanced settings</AdvRow>
                </FindSide>
              </FindRow>
            </Field>
            <MatchField $w={786} $h={210}>
              <FieldLegend $blue>Matching users - double click to load</FieldLegend>
              <GridBox>
                <GridHead>
                  <HeadCell>User ID</HeadCell>
                  <HeadCell>Last Name</HeadCell>
                  <HeadCell>First Name</HeadCell>
                  <HeadCell>Department</HeadCell>
                  <HeadCell>Telephone</HeadCell>
                </GridHead>
                <GridMiddle>
                  <RowsClip>
                    <Rows>
                      {rows.map((r) => (
                        <DataRow key={r.c[0]} $tone={r.tone}>
                          {r.c.map((v, i) => <DataCell key={i}>{v}</DataCell>)}
                        </DataRow>
                      ))}
                    </Rows>
                  </RowsClip>
                  <VBar>
                    <Tri $dir="up" $c="#555" />
                    <VThumb />
                    <Tri $dir="down" $c="#aaa" />
                  </VBar>
                </GridMiddle>
                <HBarRow>
                  <HBar>
                    <Tri $dir="left" $c="#999" />
                    <HThumb />
                    <Tri $dir="right" $c="#444" />
                  </HBar>
                </HBarRow>
                <Pager>
                  <PageEnd $c="#9aa7bd"><Tri $dir="left" $c="#9aa7bd" /></PageEnd>
                  <PagerGap $w={13} />
                  <Tri $dir="left" $c="#9aa7bd" />
                  <PageBox>1</PageBox>
                  <PageOf>/ 2</PageOf>
                  <Tri $dir="right" $c="#1f3a7a" />
                  <PagerGap $w={13} />
                  <PageEnd $c="#1f3a7a" $right><Tri $dir="right" $c="#1f3a7a" /></PageEnd>
                </Pager>
              </GridBox>
            </MatchField>
          </ModalBody>
          <StatusBar><StatusCell>Finished</StatusCell></StatusBar>
        </Modal>
      </AppArea>
    </Page>
  );
}
